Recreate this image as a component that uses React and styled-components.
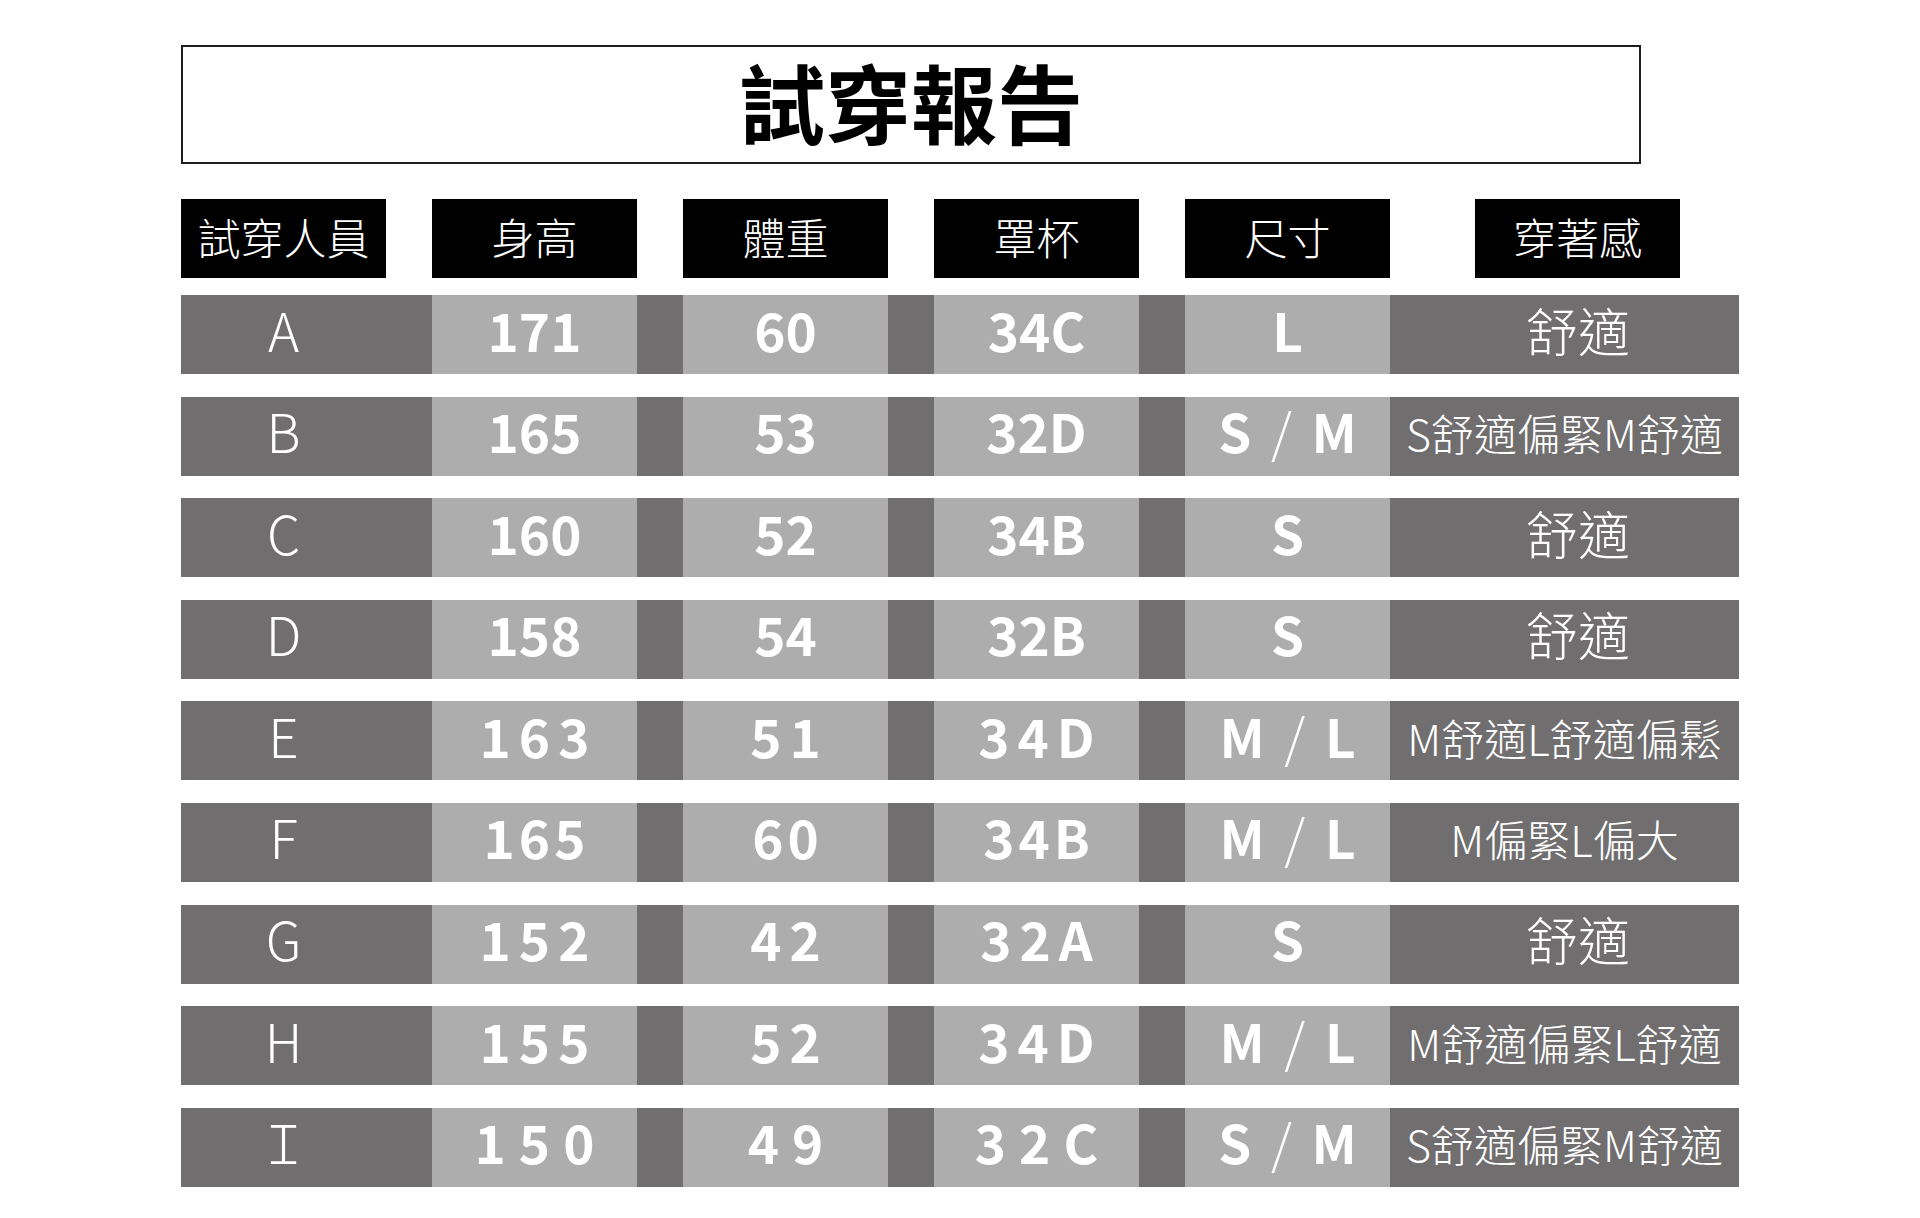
import React from "react";
import styled, { createGlobalStyle } from "styled-components";

const Global = createGlobalStyle`
  html, body { margin: 0; padding: 0; background: #ffffff; }
  body { font-family: "Noto Sans CJK TC", "Noto Sans", sans-serif; }
`;

const DARK = "#706e6f";
const LIGHT = "#aeadad";

const Page = styled.div`
  width: 1920px;
  height: 1218px;
  box-sizing: border-box;
  padding: 45px 0 0 181px;
  display: flex;
  flex-direction: column;
`;

const TitleBox = styled.div`
  width: 1460px;
  height: 119px;
  box-sizing: border-box;
  border: 2px solid #1e1e1e;
  display: flex;
  align-items: center;
  justify-content: center;
  padding-bottom: 7px;
`;

const Title = styled.h1`
  margin: 0;
  font-family: "Noto Sans CJK TC", sans-serif;
  font-weight: 700;
  font-size: 86px;
  line-height: 1;
  color: #000;
`;

const HeaderRow = styled.div`
  margin-top: 35px;
  display: flex;
  height: 79px;
`;

const HeaderCell = styled.div`
  width: 205px;
  height: 79px;
  box-sizing: border-box;
  padding-bottom: 5px;
  background: #000;
  color: #fff;
  display: flex;
  align-items: center;
  justify-content: center;
  font-weight: 300;
  font-size: 43px;
  line-height: 1;
  margin-left: ${(p) => p.$offset || 0}px;
`;

const Rows = styled.div`
  margin-top: 17px;
  display: flex;
  flex-direction: column;
  gap: 22.6px;
`;

const Row = styled.div`
  display: flex;
  width: 1558px;
  height: 79px;
  background: ${DARK};
`;

const Label = styled.div`
  width: 205px;
  margin-right: 46px;
  box-sizing: border-box;
  padding-bottom: 11px;
  display: flex;
  align-items: center;
  justify-content: center;
  color: #fff;
  font-weight: 300;
  font-size: 53px;
  line-height: 1;
`;

const ValueCell = styled.div`
  width: 205px;
  background: ${LIGHT};
  display: flex;
  align-items: center;
  justify-content: center;
  color: #fff;
  font-weight: 700;
  font-size: 53px;
  line-height: 1;
  letter-spacing: ${(p) => p.$ls}px;
  padding: 0 0 11px ${(p) => p.$ls}px;
  box-sizing: border-box;
  white-space: pre;
  & + & { margin-left: 46px; }
`;

const Slash = styled.span`
  font-weight: 300;
`;

const Comment = styled.div`
  flex: 1;
  display: flex;
  align-items: center;
  justify-content: center;
  color: #fff;
  font-weight: 300;
  font-size: ${(p) => (p.$big ? 52 : 43)}px;
  line-height: 1;
  padding-left: ${(p) => (p.$big ? 27 : 0)}px;
  padding-bottom: ${(p) => (p.$big ? 10 : 7)}px;
  white-space: nowrap;
`;

const headers = ["試穿人員", "身高", "體重", "罩杯", "尺寸"];

const data = [
  { id: "A", h: "171", w: "60", cup: "34C", size: ["L"], c: "舒適", big: true, ls: 0 },
  { id: "B", h: "165", w: "53", cup: "32D", size: ["S", "M"], c: "S舒適偏緊M舒適", ls: 0 },
  { id: "C", h: "160", w: "52", cup: "34B", size: ["S"], c: "舒適", big: true, ls: 0 },
  { id: "D", h: "158", w: "54", cup: "32B", size: ["S"], c: "舒適", big: true, ls: 0 },
  { id: "E", h: "163", w: "51", cup: "34D", size: ["M", "L"], c: "M舒適L舒適偏鬆", ls: 8 },
  { id: "F", h: "165", w: "60", cup: "34B", size: ["M", "L"], c: "M偏緊L偏大", ls: 4 },
  { id: "G", h: "152", w: "42", cup: "32A", size: ["S"], c: "舒適", big: true, ls: 8 },
  { id: "H", h: "155", w: "52", cup: "34D", size: ["M", "L"], c: "M舒適偏緊L舒適", ls: 8 },
  { id: "Ｉ", h: "150", w: "49", cup: "32C", size: ["S", "M"], c: "S舒適偏緊M舒適", ls: 13 },
];

function SizeValue({ size }) {
  if (size.length === 1) return <span>{size[0]}</span>;
  return (
    <span>
      {size[0]}
      <Slash> / </Slash>
      {size[1]}
    </span>
  );
}

export default function App() {
  return (
    <>
      <Global />
      <Page>
        <TitleBox>
          <Title>試穿報告</Title>
        </TitleBox>
        <HeaderRow>
          {headers.map((h, i) => (
            <HeaderCell key={h} $offset={i === 0 ? 0 : 46}>
              {h}
            </HeaderCell>
          ))}
          <HeaderCell $offset={85}>穿著感</HeaderCell>
        </HeaderRow>
        <Rows>
          {data.map((r) => (
            <Row key={r.id}>
              <Label>{r.id}</Label>
              <ValueCell $ls={r.ls}>{r.h}</ValueCell>
              <ValueCell $ls={r.ls}>{r.w}</ValueCell>
              <ValueCell $ls={r.ls}>{r.cup}</ValueCell>
              <ValueCell $ls={4}>
                <SizeValue size={r.size} />
              </ValueCell>
              <Comment $big={r.big}>{r.c}</Comment>
            </Row>
          ))}
        </Rows>
      </Page>
    </>
  );
}
